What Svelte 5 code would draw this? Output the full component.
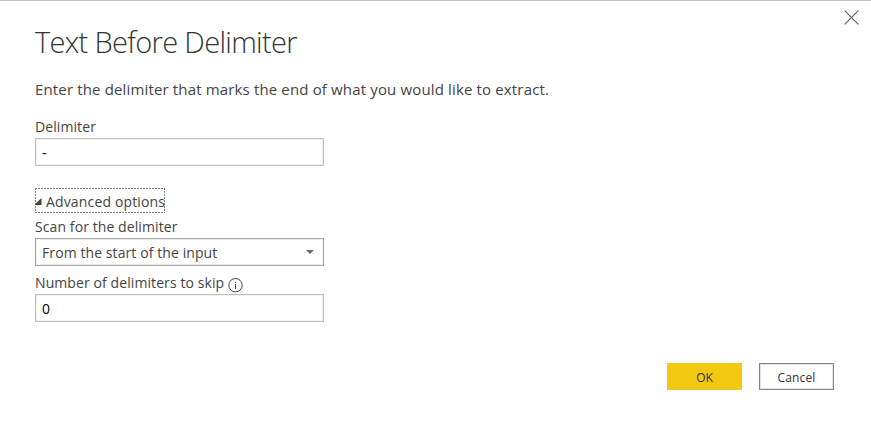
<script>
  let delimiter = $state('-');
  let skip = $state('0');
</script>

<div class="dialog">
  <button class="close" aria-label="Close">
    <svg width="15" height="15" viewBox="0 0 15 15"><path d="M.7.7l13.6 13.6M14.3.7L.7 14.3" fill="none" stroke="#5c5c5c" stroke-width="1.1" /></svg>
  </button>
  <h1><span>Text Before Delimiter</span></h1>
  <p><span>Enter the delimiter that marks the end of what you would like to extract.</span></p>
  <label class="l1" for="delimiter"><span>Delimiter</span></label>
  <input id="delimiter" bind:value={delimiter} />
  <div class="advanced">
    <svg width="7" height="7" viewBox="0 0 7 7"><path d="M6.5 0v7H0v-.8z" fill="#444" /></svg>
    <span>Advanced options</span>
  </div>
  <div class="l2"><span>Scan for the delimiter</span></div>
  <div class="select">
    <span>From the start of the input</span>
    <svg width="8" height="4" viewBox="0 0 8 4"><path d="M0 0h8L4 4z" fill="#6b6b6b" /></svg>
  </div>
  <label class="l3" for="skip"><span>Number of delimiters to skip</span>
    <svg width="15" height="15" viewBox="0 0 15 15"><circle cx="7.5" cy="7.2" r="6.7" fill="none" stroke="#444" stroke-width="1" /><path d="M7.5 6v5M7.5 3.8v1.1" stroke="#444" stroke-width="1" /></svg>
  </label>
  <input id="skip" bind:value={skip} />
  <footer>
    <button class="ok"><span>OK</span></button>
    <button class="cancel"><span>Cancel</span></button>
  </footer>
</div>

<style>
  :global(body) { background: #fff; }
  .dialog {
    position: relative;
    box-sizing: border-box;
    width: 871px;
    height: 427px;
    padding: 21px 37px 0 35px;
    border-top: 1px solid #c3c3c3;
    color: #444;
    background: #fff;
    font: 14px/22px "Open Sans", "Noto Sans", sans-serif;
    white-space: nowrap;
    overflow: hidden;
  }
  .close {
    position: absolute;
    top: 9px;
    right: 12px;
    width: 15px;
    height: 15px;
    padding: 0;
    border: 0;
    background: none;
  }
  .close svg { display: block; }
  h1 {
    margin: 0;
    height: 40px;
    font-size: 29px;
    line-height: 40px;
    font-weight: 300;
    letter-spacing: -0.67px;
    color: #333;
  }
  p {
    margin: 16px 0 0;
    font-size: 15px;
    line-height: 22px;
    letter-spacing: 0.15px;
  }
  .l1, .l2, .l3 { display: block; height: 22px; letter-spacing: 0.09px; }
  .l1 { margin-top: 16px; }
  .l2 { margin-top: 3px; }
  .l3 { display: flex; margin-top: 6px; }
  .l3 svg { margin: 6px 0 0 4px; }
  input, .select {
    display: flex;
    align-items: center;
    justify-content: space-between;
    box-sizing: border-box;
    width: 289px;
    height: 28px;
    padding: 0 9px 0 6px;
    border: 1px solid #bfbfbf;
    border-radius: 0;
    background: #fff;
    box-shadow: inset 0 0 0 1px #f1f1f1;
    font: inherit;
    color: #000;
    outline: none;
  }
  .select {
    border-color: #a6a6a6;
    color: #444;
    letter-spacing: 0.09px;
  }
  .select span { padding-top: 2px; }
  .advanced {
    display: flex;
    align-items: center;
    box-sizing: border-box;
    width: 130px;
    height: 25px;
    margin-top: 22px;
    background:
      repeating-linear-gradient(90deg, #808080 0 2px, transparent 2px 3px) 0 0 / 100% 1px no-repeat,
      repeating-linear-gradient(90deg, #808080 0 2px, transparent 2px 3px) 0 100% / 100% 1px no-repeat,
      repeating-linear-gradient(#808080 0 2px, transparent 2px 3px) 0 0 / 1px 100% no-repeat,
      repeating-linear-gradient(#808080 0 2px, transparent 2px 3px) 100% 0 / 1px 100% no-repeat;
    letter-spacing: 0.15px;
  }
  .advanced span { padding-top: 2px; }
  .advanced svg { flex: none; margin: 2px 4px 0 0; }
  footer {
    display: flex;
    justify-content: flex-end;
    gap: 17px;
    margin-top: 41px;
  }
  footer button {
    box-sizing: border-box;
    width: 75px;
    height: 27px;
    padding: 2px 0 0;
    border: 0;
    border-radius: 0;
    background: #f2c811;
    color: #333;
    font: 12px/20px "Open Sans", "Noto Sans", sans-serif;
  }
  footer .cancel {
    border: 1px solid #858585;
    background: #fff;
    box-shadow: inset 0 0 0 1px #e4e4e4;
    letter-spacing: 0.15px;
  }
</style>
